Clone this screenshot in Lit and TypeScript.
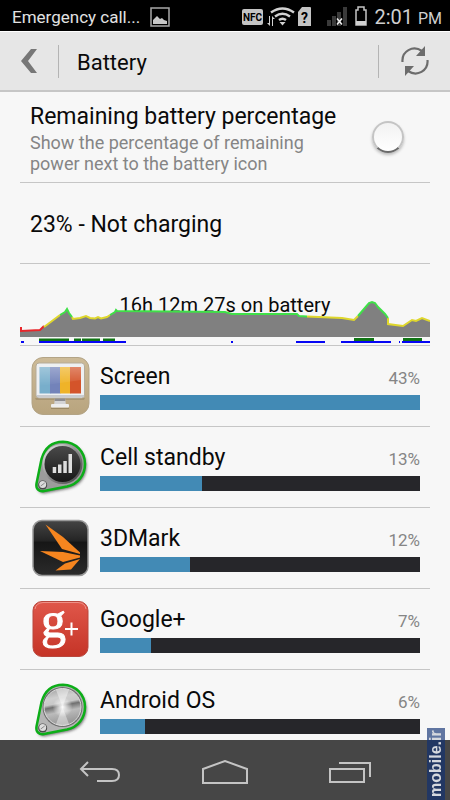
import { LitElement, html, css, svg } from "lit";
import { customElement, property, state } from "lit/decorators.js";

interface Usage {
  name: string;
  percent: number;
  share: number;
  icon: unknown;
}

const screenIcon = svg`
  <svg viewBox="0 0 60 60" aria-hidden="true">
    <defs>
      <linearGradient id="tan" x1="0" y1="0" x2="0" y2="1"><stop offset="0" stop-color="#cdbb98"/><stop offset="1" stop-color="#b8a47e"/></linearGradient>
      <linearGradient id="shine" x1="0" y1="0" x2="0" y2="1"><stop offset="0" stop-color="#fff" stop-opacity=".3"/><stop offset="1" stop-color="#fff" stop-opacity="0"/></linearGradient>
    </defs>
    <rect x="2" y="1.500" width="57" height="57" rx="11" fill="url(#tan)" stroke="#b3a486"/>
    <path d="M5 42h50l-1 2H6z" fill="#9b8966" opacity=".6"/>
    <path d="M25 42h10l1 7H24z" fill="#d4d4d6"/>
    <path d="M25 42h10l.4 3H24.600z" fill="#8d8c90"/>
    <rect x="21" y="48" width="18" height="3.500" rx="1" fill="#eeeeee"/>
    <path d="M21 52h18v1H21z" fill="#9b8966"/>
    <rect x="6" y="7" width="48.500" height="35" rx="3" fill="#eef0f2" stroke="#b5ab98"/>
    <path d="M6.500 39h47.500v1a2 2 0 0 1-2 1.500H8.500a2 2 0 0 1-2-1.500z" fill="#c9cbcf"/>
    <rect x="9.500" y="11" width="11" height="26.500" fill="#78aecb"/>
    <rect x="20" y="11" width="10.500" height="26.500" fill="#7383ba"/>
    <rect x="30" y="11" width="10.500" height="26.500" fill="#efb328"/>
    <rect x="40" y="11" width="11" height="26.500" fill="#d4542a"/>
    <path d="M9.500 11H51v13L9.500 30z" fill="url(#shine)"/>
  </svg>`;

const tagOutline = "M11.500 22C15 10 23 4.700 33 4.700C46 5 55 15 55 27C55 38 48 47 37 49.500L14 54C9 55 5.500 51.500 6.500 46.500Z";

const cellIcon = svg`
  <svg viewBox="0 0 60 60" aria-hidden="true">
    <defs>
      <filter id="soft" x="-20%" y="-20%" width="140%" height="140%"><feGaussianBlur stdDeviation="1.500"/></filter>
      <linearGradient id="rim" x1="0" y1="0" x2="1" y2="1"><stop offset="0" stop-color="#f2f2f2"/><stop offset=".5" stop-color="#8c8c8c"/><stop offset="1" stop-color="#3c3c3c"/></linearGradient>
      <linearGradient id="dark" x1="0" y1="0" x2="0" y2="1"><stop offset="0" stop-color="#4a4a4a"/><stop offset="1" stop-color="#171717"/></linearGradient>
    </defs>
    <path d="${tagOutline}" fill="#444" filter="url(#soft)" opacity=".8" transform="translate(1.500 2)"/>
    <path d="${tagOutline}" fill="#9c9c9c" stroke="#0cae18" stroke-width="2.500"/>
    <circle cx="32.500" cy="27" r="20" fill="url(#rim)"/>
    <circle cx="32.500" cy="27" r="18" fill="url(#dark)"/>
    <path d="M22.700 36h3.500v-6h-3.500zM28 36h3.500v-8.500H28zM33.300 36h3.500V24h-3.500zM38.500 36H42V17h-3.500z" fill="#dedede"/>
    <circle cx="12.700" cy="48" r="4.500" fill="#4a4a4a"/><circle cx="12.700" cy="47.500" r="3.500" fill="#dcdcdc"/>
    <path d="M10.700 49l4-3" stroke="#888"/>
  </svg>`;

const markIcon = svg`
  <svg viewBox="0 0 60 60" aria-hidden="true">
    <defs><linearGradient id="coal" x1="0" y1="0" x2="0" y2="1"><stop offset="0" stop-color="#454545"/><stop offset=".36" stop-color="#252525"/><stop offset=".4" stop-color="#161616"/><stop offset="1" stop-color="#2b2b2b"/></linearGradient></defs>
    <rect x="3" y="2.500" width="55" height="55" rx="9" fill="url(#coal)" stroke="#999" stroke-width="1.500"/>
    <path d="M15.500 6.500L33 19L50 34.500V36L32 31Z" fill="#f6851f"/>
    <path d="M10 33L33 34L50 37.500V39.500L33 44Z" fill="#f6851f"/>
    <path d="M25.500 52.500L35 45.500L50 41L41 51.500Z" fill="#f6851f"/>
  </svg>`;

const plusIcon = svg`
  <svg viewBox="0 0 60 60" aria-hidden="true">
    <defs><linearGradient id="red" x1="0" y1="0" x2="0" y2="1"><stop offset="0" stop-color="#e0574a"/><stop offset="1" stop-color="#c53427"/></linearGradient></defs>
    <rect x="3" y="2.500" width="55" height="55" rx="9" fill="url(#red)" stroke="#b9473d"/>
    <path d="M5 10q1-6 8-6.500h35q7 .5 8 6.500" fill="none" stroke="#ee9188"/>
    <text x="11" y="38" class="logo-g">g</text>
    <path d="M41.500 23.500v13M35 30h13" stroke="#fff" stroke-width="2" fill="none"/>
  </svg>`;

const osIcon = svg`
  <svg viewBox="0 0 60 60" aria-hidden="true">
    <defs>
      <filter id="soft2" x="-20%" y="-20%" width="140%" height="140%"><feGaussianBlur stdDeviation="1.500"/></filter>
      <linearGradient id="steel" x1="0" y1="0" x2=".2" y2="1"><stop offset="0" stop-color="#9a9a9a"/><stop offset=".3" stop-color="#cfcfcf"/><stop offset=".46" stop-color="#c8c8c8"/><stop offset=".54" stop-color="#707070"/><stop offset=".7" stop-color="#bbb"/><stop offset="1" stop-color="#999"/></linearGradient>
      <radialGradient id="glow"><stop offset="0" stop-color="#fff"/><stop offset="1" stop-color="#fff" stop-opacity="0"/></radialGradient>
    </defs>
    <path d="${tagOutline}" fill="#444" filter="url(#soft2)" opacity=".8" transform="translate(1.500 2)"/>
    <path d="${tagOutline}" fill="#b5b5b5" stroke="#0cae18" stroke-width="2.500"/>
    <circle cx="32.500" cy="27" r="20" fill="#6d6d6d"/>
    <circle cx="32.500" cy="27" r="18.500" fill="url(#steel)" stroke="#ddd"/>
    <path d="M32.500 27L26 10q6.500-3 13 0zM32.500 27L26 44q6.500 3 13 0z" fill="#fff" opacity=".4"/>
    <circle cx="32.500" cy="27" r="10" fill="url(#glow)"/>
    <circle cx="12.700" cy="48" r="4.500" fill="#4a4a4a"/><circle cx="12.700" cy="47.500" r="3.500" fill="#dcdcdc"/>
    <path d="M10.700 49l4-3" stroke="#888"/>
  </svg>`;

const usages: Usage[] = [
  { name: "Screen", percent: 43, share: 100, icon: screenIcon },
  { name: "Cell standby", percent: 13, share: 32, icon: cellIcon },
  { name: "3DMark", percent: 12, share: 28, icon: markIcon },
  { name: "Google+", percent: 7, share: 16, icon: plusIcon },
  { name: "Android OS", percent: 6, share: 14, icon: osIcon },
];

@customElement("usage-row")
class UsageRow extends LitElement {
  @property({ attribute: false }) usage!: Usage;

  static styles = css`
    :host { display: flex; align-items: center; gap: 10px; height: 80px; padding: 0 10px; border-bottom: 1px solid #c6c6c6; }
    .icon { flex: none; width: 60px; height: 60px; }
    .icon svg { display: block; width: 100%; height: 100%; overflow: visible; }
    .logo-g { font: 400 50px "Liberation Serif", serif; fill: #fff; stroke: #fff; stroke-width: 1px; }
    .detail { flex: 1; display: flex; flex-direction: column; gap: 2px; }
    .line { display: flex; justify-content: space-between; align-items: baseline; line-height: 30px; }
    .name { font-size: 23px; color: #0a0a0a; }
    .percent { font-size: 17px; color: #858585; }
    .track { height: 15px; background: #26262a; }
    .fill { height: 100%; background: #428ab5; }
  `;

  render() {
    const u = this.usage;
    return html`
      <div class="icon">${u.icon}</div>
      <div class="detail">
        <div class="line"><span class="name">${u.name}</span><span class="percent">${u.percent}%</span></div>
        <div class="track"><div class="fill" style="width:${u.share}%"></div></div>
      </div>`;
  }
}

@customElement("app-root")
class AppRoot extends LitElement {
  @state() private showPercent = false;

  static styles = css`
    :host { display: flex; flex-direction: column; height: 100vh; position: relative; overflow: hidden; background: #f7f7f7; font-family: Roboto, "Noto Sans", sans-serif; color: #0a0a0a; }
    button { border: 0; padding: 0; background: none; display: grid; place-items: center; }
    svg { display: block; }
    .status { flex: none; height: 31px; display: flex; align-items: center; padding: 2px 8px 0 12px; box-sizing: border-box; background: #000; color: #e2e2e2; }
    .carrier { font-size: 17px; margin-right: 10px; }
    .indicators { margin-left: auto; }
    .nfc { font: 700 10px Roboto, sans-serif; fill: #000; }
    .sim { font: 700 14px Roboto, sans-serif; fill: #000; }
    .clock { font-size: 20px; color: #cfcfcf; margin-left: 5px; }
    .meridiem { font-size: 16px; }
    .bar { flex: none; display: flex; align-items: center; height: 61px; box-sizing: border-box; background: #e6e6e6; border-top: 1px solid #fff; border-bottom: 2px solid #c6c6c6; }
    .back { width: 58px; height: 56px; }
    .rule { width: 1px; height: 33px; background: #b4b4b4; }
    .title { flex: 1; margin: 0; padding: 2px 0 0 18px; font-size: 22px; font-weight: 400; }
    .refresh { width: 71px; height: 56px; }
    .content { flex: 1; min-height: 0; overflow: hidden; padding: 0 20px; }
    .setting { display: flex; align-items: center; justify-content: space-between; height: 90px; padding: 0 26px 0 10px; border-bottom: 1px solid #c6c6c6; }
    .setting label { padding-top: 2px; }
    .label { display: block; font-size: 23px; line-height: 30px; }
    .hint { display: block; max-width: 300px; font-size: 18px; line-height: 21px; color: #858585; }
    .toggle { appearance: none; flex: none; width: 32px; height: 32px; margin: 0; border: 2px solid #c4c4c4; border-bottom-color: #6a6a6a; border-radius: 50%; background: linear-gradient(#f2f2f2, #fff); box-shadow: 0 2px 3px #bbb; }
    .toggle:checked { background: #428ab5; }
    .charge { height: 80px; display: flex; align-items: center; padding: 0 10px; font-size: 23px; line-height: 30px; border-bottom: 1px solid #c6c6c6; }
    .charge span { padding-top: 4px; }
    .history { display: grid; height: 81px; border-bottom: 1px solid #c6c6c6; }
    .history > * { grid-area: 1 / 1; }
    .duration { place-self: center; font-size: 20px; }
    .graph { width: 100%; height: 81px; }
    .nav { flex: none; display: flex; justify-content: center; height: 60px; background: #464646; }
    .nav button { width: 125px; height: 60px; padding-top: 4px; }
    .brand { position: absolute; right: 5px; bottom: 0; width: 18px; height: 72px; display: flex; align-items: center; justify-content: center; writing-mode: vertical-rl; transform: rotate(180deg); background: rgba(15, 48, 115, 0.65); color: #d5d8de; font: 700 16px "Liberation Sans", sans-serif; }
  `;

  private graph() {
    return html`
      <svg class="graph" viewBox="0 0 410 81" preserveAspectRatio="none" role="img" aria-label="Battery history">
        <path fill="#808080" d="M0 73V64l2 3 18-1 4-3 16-12 5-3 2-3 2 4 3 4 1 2 7-1 6-2 4 2 5 .5 3-1.500 3 1.500 6-1.500 3-2 5-3 1-2 1 1 108 1 7 2h65l2 2 8 .5 35 1.500 12 2 4-4 11-13 3-1 3 1 3 4 7 7 3 4v6l15 2 9-6 4 1 6-3 8 3v16z"/>
        <g fill="none" stroke-width="2">
          <path stroke="#e8262b" d="M1 63v4l19-1 4-4"/>
          <path stroke="#dfd72c" d="M24 63l16-12M52 53l1 2 7-1 6-2 4 2 5 .5 3-1.500 3 1.500 6-1.500 3-2M287 52.500l35 1.500 12 2 4-4M368 54v6l15 2 9-6 4 1 6-3 8 3"/>
          <path stroke="#3fe048" d="M40 51l5-3 2-3 2 4 3 4M90 51l5-3 1-2 1 1 108 1 7 2h65l2 2 8 .5M338 52l11-13 3-1 3 1 3 4 7 7 3 4"/>
        </g>
        <path fill="#107414" d="M19 74.500h30v3H19zM54 74.500h7v3h-7zM62 74.500h18v3H62zM83 74.500h12v3H83zM334 74h20v4h-20zM383 74h19v4h-19z"/>
        <path fill="#0606f4" d="M1 77h3v2H1zM19 77h87v2H19zM211 77h2v2h-2zM276 77h29v2h-29zM321 77h50v2h-50zM379 77h1v2h-1zM382 77h28v2h-28z"/>
      </svg>`;
  }

  render() {
    return html`
      <div class="status">
        <span class="carrier">Emergency call...</span>
        <svg width="20" height="20" viewBox="0 0 20 20" aria-hidden="true"><rect x="1" y="1" width="18" height="18" fill="none" stroke="#a8a8a8" stroke-width="1.500"/><path d="M3 17v-4l4-4 3 3 2-1 2 2 3 1v3z" fill="#c8c8c8"/></svg>
        <svg class="indicators" width="128" height="22" viewBox="0 0 128 22" aria-hidden="true">
          <rect x="1" y="3" width="21" height="16" rx="2" fill="#c4c4c4"/>
          <text class="nfc" x="11.500" y="14.500" text-anchor="middle">NFC</text>
          <g fill="none" stroke="#d2d2d2" stroke-width="2.500"><path d="M30 6.500q11.500-8 23 0M34 10.500q7.500-5.500 15 0M38 14q3.500-2.500 7 0"/></g>
          <path d="M38.500 16h6l-3 3.500zM28 10v7h-2l3 3V10zM32 20v-7h2l-3-3v10z" fill="#d2d2d2"/>
          <path d="M61 1h8q1 0 1 1v18H57V6z" fill="#c4c4c4"/>
          <text class="sim" x="63.500" y="17" text-anchor="middle">?</text>
          <path d="M86 14h4v6h-4zM91 10h4v10h-4zM96 6h4v14h-4zM102 1h4v19h-4z" fill="#3a3a3a"/>
          <path d="M96 12.500l5 6M101 12.500l-5 6" stroke="#eee" stroke-width="1.500"/>
          <path d="M115 4h2V1h6v3h2v15h-10z" fill="none" stroke="#c4c4c4" stroke-width="1.500"/><path d="M115 15h10v4h-10z" fill="#d0d0d0"/>
        </svg>
        <span class="clock">2:01 <span class="meridiem">PM</span></span>
      </div>

      <header class="bar">
        <button class="back" aria-label="Back"><svg width="18" height="26" viewBox="0 0 18 26"><path d="M11 1h6L8 13l9 12h-6L1 13z" fill="#777"/></svg></button>
        <span class="rule"></span>
        <h1 class="title">Battery</h1>
        <span class="rule"></span>
        <button class="refresh" aria-label="Refresh"><svg width="30" height="30" viewBox="0 0 30 30"><path d="M2.500 16C1.500 5 13-1 22 5M27.500 14C28.500 25 17 31 8 25" fill="none" stroke="#6c6c6c" stroke-width="2.200"/><path d="M25 0v10H16zM5 30V20h9z" fill="#6c6c6c"/></svg></button>
      </header>

      <main class="content">
        <div class="setting">
          <label for="percent"><span class="label">Remaining battery percentage</span><span class="hint">Show the percentage of remaining power next to the battery icon</span></label>
          <input class="toggle" id="percent" type="checkbox" .checked=${this.showPercent} @change=${(e: Event) => (this.showPercent = (e.target as HTMLInputElement).checked)}>
        </div>
        <div class="charge"><span>23% - Not charging</span></div>
        <div class="history"><span class="duration">16h 12m 27s on battery</span>${this.graph()}</div>
        ${usages.map((u) => html`<usage-row .usage=${u}></usage-row>`)}
      </main>

      <nav class="nav">
        <button aria-label="Back"><svg width="42" height="24" viewBox="0 0 42 24"><path d="M9 2L2 9l7 7M2 9h31q7 0 7 6t-7 6H18" fill="none" stroke="#c4c4c4" stroke-width="2"/></svg></button>
        <button aria-label="Home"><svg width="46" height="24" viewBox="0 0 46 24"><path d="M1 23V9L23 1l22 8v14z" fill="none" stroke="#c4c4c4" stroke-width="2"/></svg></button>
        <button aria-label="Recent apps"><svg width="44" height="22" viewBox="0 0 44 22"><path d="M2 8h34v13H2zM11 2h31v14" fill="none" stroke="#c4c4c4" stroke-width="2"/></svg></button>
      </nav>
      <div class="brand">mobile.ir</div>`;
  }
}
